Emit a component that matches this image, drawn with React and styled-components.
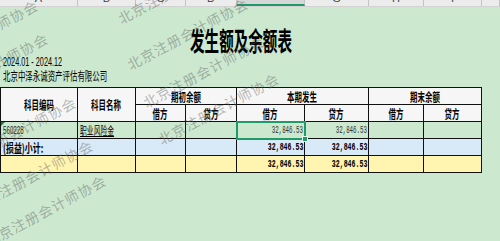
import React from 'react';
import styled, { createGlobalStyle } from 'styled-components';

const Global = createGlobalStyle`
  html, body { margin: 0; padding: 0; background: #cce8cf; }
  body { width: 500px; height: 241px; overflow: hidden; }
`;

const Page = styled.div`
  position: relative;
  width: 500px;
  height: 241px;
  overflow: hidden;
  background: #cce8cf;
  font-family: "Noto Sans CJK SC", "Liberation Sans", sans-serif;
  color: #000;
`;

const Strip = styled.div`
  display: grid;
  grid-template-columns: 78px 58px 50px 51px 68px 64px 55px 58px 1fr;
  height: 6px;
  background: #ececec;
  border-bottom: 1px solid #d2d2d2;
  overflow: hidden;
`;

const StripCell = styled.div`
  box-sizing: border-box;
  height: 6px;
  display: flex;
  align-items: flex-end;
  justify-content: center;
  padding-bottom: 3px;
  overflow: hidden;
  border-right: 1px solid #c4c4c4;
  background: ${p => (p.$active ? '#d6d6d6' : 'transparent')};
  border-bottom: ${p => (p.$active ? '2px solid #1f9a68' : '0')};
  font-family: "Liberation Sans", sans-serif;
  font-size: 11px;
  line-height: 9px;
  color: #444;
`;

const TitleBlock = styled.div`
  width: 482px;
  height: 48px;
  box-sizing: border-box;
  padding-top: 18px;
  display: flex;
  justify-content: center;
`;

const Title = styled.span`
  display: inline-block;
  font-size: 26px;
  line-height: 30px;
  font-weight: 600;
  transform: scaleX(0.56);
  transform-origin: center;
  white-space: nowrap;
`;

const InfoLine = styled.div`
  height: 14px;
  line-height: 14px;
  padding-left: 3px;
  font-family: ${p => (p.$latin ? '"Liberation Sans", sans-serif' : '"Noto Sans CJK SC", sans-serif')};
  font-size: ${p => p.$size}px;
  white-space: nowrap;
`;

const Narrow = styled.span`
  display: inline-block;
  white-space: nowrap;
  transform: scaleX(${p => p.$sx || 0.62});
  transform-origin: ${p => p.$origin || 'left'} center;
`;

const Grid = styled.div`
  margin-top: 4px;
  display: grid;
  grid-template-columns: 76px 57px 49px 50px 67px 63px 54px 57px;
  grid-template-rows: repeat(5, 16px);
  gap: 1px;
  padding: 1px;
  background: #111;
  width: max-content;
`;

const justify = { left: 'flex-start', center: 'center', right: 'flex-end' };

const Cell = styled.div`
  position: relative;
  grid-column: ${p => p.$col} / span ${p => p.$colSpan || 1};
  grid-row: ${p => p.$row} / span ${p => p.$rowSpan || 1};
  display: flex;
  align-items: center;
  justify-content: ${p => justify[p.$align || 'left']};
  padding: 0 ${p => (p.$align === 'right' ? '1px' : '2px')};
  background: ${p => p.$bg || '#cce8cf'};
  overflow: ${p => (p.$selected ? 'visible' : 'hidden')};
  white-space: nowrap;
  font-size: 12px;
  font-weight: ${p => (p.$bold ? 700 : 400)};

  ${p => p.$flag && `
    &::before {
      content: '';
      position: absolute;
      left: 0;
      top: 0;
      border-top: 4px solid #1f7a3a;
      border-right: 4px solid transparent;
    }
  `}

  ${p => p.$selected && `
    z-index: 2;
    &::after {
      content: '';
      position: absolute;
      left: -1px;
      top: -1px;
      right: -2px;
      bottom: -2px;
      border: 2px solid #1f9a68;
      pointer-events: none;
    }
  `}
`;

const Handle = styled.span`
  position: absolute;
  right: -4px;
  bottom: -4px;
  width: 4px;
  height: 4px;
  background: #1f9a68;
  border: 1px solid #e9f5ec;
  z-index: 3;
`;

const HeadText = styled(Narrow)`
  font-size: 12px;
  font-weight: 700;
`;

const Num = styled(Narrow)`
  font-family: "Liberation Mono", monospace;
  font-size: ${p => (p.$bold ? 11 : 10)}px;
  font-weight: ${p => (p.$bold ? 700 : 400)};
  color: ${p => (p.$bold ? '#000' : '#333')};
`;

const CodeText = styled(Narrow)`
  font-family: "Liberation Sans", sans-serif;
  font-size: 10px;
  color: #222;
`;

const NameText = styled(Narrow)`
  font-size: 11px;
  text-decoration: underline;
`;

const Watermarks = styled.div`
  position: absolute;
  inset: 0;
  pointer-events: none;
  z-index: 5;
`;

const Mark = styled.span`
  position: absolute;
  left: ${p => p.$x - 7}px;
  top: ${p => p.$y - 7}px;
  font-family: "Noto Sans CJK SC", sans-serif;
  font-size: 14px;
  line-height: 14px;
  letter-spacing: 1px;
  white-space: nowrap;
  color: rgba(95, 100, 95, 0.45);
  transform: rotate(-28deg);
  transform-origin: 7px 50%;
`;

const columns = ['A', 'B', 'C', 'D', 'F', 'G', 'H', 'I', ''];
const marks = [
  [125, 16], [134, 62], [150, 100], [165, 137],
  [-76, 64], [-66, 97], [-38, 161], [-21, 204], [-8, 239],
];

const BLUE = '#d8e9f7';
const YELLOW = '#fff4b0';
const HEAD = '#f6f6f6';
const AMOUNT = '32,846.53';

export default function App() {
  return (
    <Page>
      <Global />
      <Strip>
        {columns.map((c, i) => (
          <StripCell key={i} $active={c === 'F'}>{c}</StripCell>
        ))}
      </Strip>

      <TitleBlock>
        <Title>发生额及余额表</Title>
      </TitleBlock>
      <InfoLine $latin $size={13}>
        <Narrow $sx={0.56}>2024.01 - 2024.12</Narrow>
      </InfoLine>
      <InfoLine $size={12}>
        <Narrow $sx={0.62}>北京中泽永诚资产评估有限公司</Narrow>
      </InfoLine>

      <Grid>
        <Cell $row={1} $col={1} $rowSpan={2} $bg={HEAD} $align="center"><HeadText $origin="center">科目编码</HeadText></Cell>
        <Cell $row={1} $col={2} $rowSpan={2} $bg={HEAD} $align="center"><HeadText $origin="center">科目名称</HeadText></Cell>
        <Cell $row={1} $col={3} $colSpan={2} $bg={HEAD} $align="center"><HeadText $origin="center">期初余额</HeadText></Cell>
        <Cell $row={1} $col={5} $colSpan={2} $bg={HEAD} $align="center"><HeadText $origin="center">本期发生</HeadText></Cell>
        <Cell $row={1} $col={7} $colSpan={2} $bg={HEAD} $align="center"><HeadText $origin="center">期末余额</HeadText></Cell>
        {[3, 4, 5, 6, 7, 8].map(c => (
          <Cell key={c} $row={2} $col={c} $bg={HEAD} $align="center">
            <HeadText $origin="center">{c % 2 ? '借方' : '贷方'}</HeadText>
          </Cell>
        ))}

        <Cell $row={3} $col={1} $flag><CodeText $sx={0.62}>560228</CodeText></Cell>
        <Cell $row={3} $col={2}><NameText>职业风险金</NameText></Cell>
        <Cell $row={3} $col={3} />
        <Cell $row={3} $col={4} />
        <Cell $row={3} $col={5} $align="right" $selected>
          <Num $sx={0.58} $origin="right">{AMOUNT}</Num>
          <Handle />
        </Cell>
        <Cell $row={3} $col={6} $align="right"><Num $sx={0.58} $origin="right">{AMOUNT}</Num></Cell>
        <Cell $row={3} $col={7} />
        <Cell $row={3} $col={8} />

        <Cell $row={4} $col={1} $bg={BLUE} $bold><HeadText $sx={0.66}>(损益)小计:</HeadText></Cell>
        <Cell $row={4} $col={2} $bg={BLUE} />
        <Cell $row={4} $col={3} $bg={BLUE} />
        <Cell $row={4} $col={4} $bg={BLUE} />
        <Cell $row={4} $col={5} $bg={BLUE} $align="right"><Num $bold $sx={0.6} $origin="right">{AMOUNT}</Num></Cell>
        <Cell $row={4} $col={6} $bg={BLUE} $align="right"><Num $bold $sx={0.6} $origin="right">{AMOUNT}</Num></Cell>
        <Cell $row={4} $col={7} $bg={BLUE} />
        <Cell $row={4} $col={8} $bg={BLUE} />

        {[1, 2, 3, 4, 7, 8].map(c => <Cell key={c} $row={5} $col={c} $bg={YELLOW} />)}
        <Cell $row={5} $col={5} $bg={YELLOW} $align="right"><Num $bold $sx={0.6} $origin="right">{AMOUNT}</Num></Cell>
        <Cell $row={5} $col={6} $bg={YELLOW} $align="right"><Num $bold $sx={0.6} $origin="right">{AMOUNT}</Num></Cell>
      </Grid>

      <Watermarks>
        {marks.map(([x, y], i) => (
          <Mark key={i} $x={x} $y={y}>北京注册会计师协会</Mark>
        ))}
      </Watermarks>
    </Page>
  );
}
